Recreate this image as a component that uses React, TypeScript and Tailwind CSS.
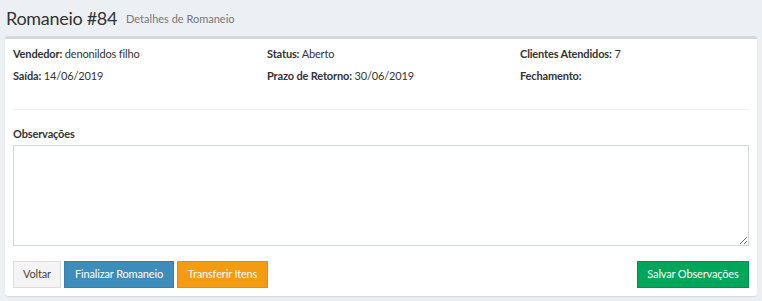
import React from "react";

const cols = [
  [
    { label: "Vendedor:", value: "denonildos filho" },
    { label: "Saída:", value: "14/06/2019" },
  ],
  [
    { label: "Status:", value: "Aberto" },
    { label: "Prazo de Retorno:", value: "30/06/2019" },
  ],
  [
    { label: "Clientes Atendidos:", value: "7" },
    { label: "Fechamento:", value: "" },
  ],
];

function Info({ label, value }: { label: string; value: string }) {
  return (
    <div className="h-[22px] leading-[22px] whitespace-nowrap">
      <span className="font-bold">{label}</span> {value}
    </div>
  );
}

export default function App() {
  return (
    <div className="min-h-[301px] w-[762px] bg-[#ecf0f5] text-[11px] tracking-[-0.15px] text-[#333] font-['Lato',sans-serif]">
      <div className="h-[36px] pl-[6px] flex items-center gap-[9px]">
        <h1 className="text-[18px] leading-none tracking-[-0.3px] text-[#333]">Romaneio #84</h1>
        <small className="text-[11px] tracking-normal text-[#777] mt-[3px]">Detalhes de Romaneio</small>
      </div>

      <div className="mx-[5px] bg-white border-t-[3px] border-[#d2d6de] rounded-[3px] shadow-[0_1px_1px_rgba(0,0,0,0.1)]">
        <div className="px-[8px] pt-[4px] pb-[8px]">
          <div className="grid grid-cols-[254px_253px_1fr]">
            {cols.map((c, i) => (
              <div key={i}>
                {c.map((r) => (
                  <Info key={r.label} label={r.label} value={r.value} />
                ))}
              </div>
            ))}
          </div>

          <div className="mt-[22px] border-t border-[#eeeeee]" />

          <div className="mt-[13px] h-[22px] leading-[22px] font-bold">Observações</div>
          <textarea className="block w-full h-[101px] border border-[#d2d6de] outline-none p-[6px]" />

          <div className="mt-[15px] flex items-center">
            <div className="flex gap-[3px]">
              <button className="h-[27px] w-[48px] bg-[#f4f4f4] border border-[#dddddd] text-[#444]">
                Voltar
              </button>
              <button className="h-[27px] w-[110px] bg-[#3c8dbc] border border-[#367fa9] text-white">
                Finalizar Romaneio
              </button>
              <button className="h-[27px] w-[91px] bg-[#f39c12] border border-[#e08e0b] text-white">
                Transferir Itens
              </button>
            </div>
            <button className="ml-auto h-[27px] w-[112px] bg-[#00a65a] border border-[#008d4c] text-white">
              Salvar Observações
            </button>
          </div>
        </div>
      </div>
    </div>
  );
}
